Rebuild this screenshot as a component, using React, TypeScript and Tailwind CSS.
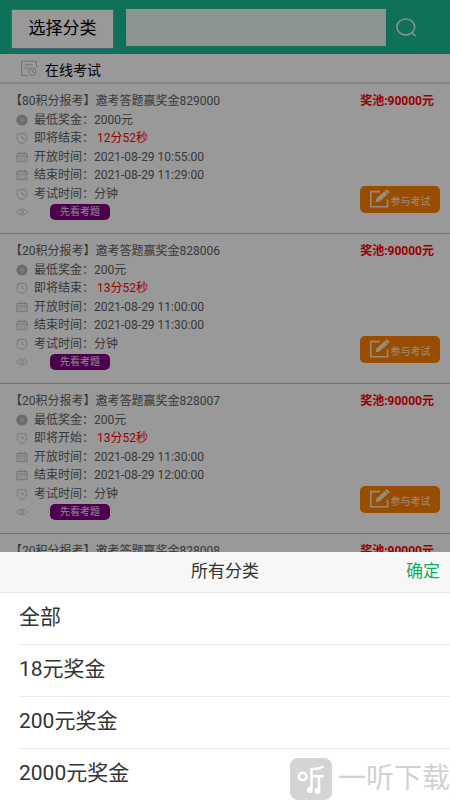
import { useState } from 'react'
import type { ReactNode } from 'react'

interface Exam {
  id: string
  points: number
  prize: string
  timerLabel: string
  timer: string
  opensAt: string
  endsAt: string
}

const EXAMS: Exam[] = [
  { id: '829000', points: 80, prize: '2000元', timerLabel: '即将结束', timer: '12分52秒', opensAt: '2021-08-29 10:55:00', endsAt: '2021-08-29 11:29:00' },
  { id: '828006', points: 20, prize: '200元', timerLabel: '即将结束', timer: '13分52秒', opensAt: '2021-08-29 11:00:00', endsAt: '2021-08-29 11:30:00' },
  { id: '828007', points: 20, prize: '200元', timerLabel: '即将开始', timer: '13分52秒', opensAt: '2021-08-29 11:30:00', endsAt: '2021-08-29 12:00:00' },
  { id: '828008', points: 20, prize: '200元', timerLabel: '即将开始', timer: '43分52秒', opensAt: '2021-08-29 12:00:00', endsAt: '2021-08-29 12:30:00' },
]

const CATEGORIES = ['全部', '18元奖金', '200元奖金', '2000元奖金']

function SearchIcon() {
  return (
    <svg viewBox="0 0 20 20" className="size-5" fill="none" stroke="#e4f5f0" strokeWidth="1.5" strokeLinecap="round">
      <ellipse cx="9.8" cy="9" rx="8.9" ry="8" />
      <path d="M16 14.6l3.2 3.2" />
    </svg>
  )
}

function PaperIcon() {
  return (
    <svg viewBox="0 0 18 17" className="h-[17px] w-[18px]" fill="none" stroke="#bdbdbd" strokeWidth="1">
      <path d="M7.5 15.5H1.6V1.2h14.8v6.6M5 4.8h7.5M4 8h5" />
      <circle cx="12.4" cy="11.8" r="3.6" />
      <path d="M12.2 9.8v2.4h2" />
    </svg>
  )
}

function CoinIcon() {
  return (
    <svg viewBox="0 0 12 12" className="size-3">
      <circle cx="6" cy="6" r="5.6" fill="#b4b4b4" />
      <path d="M4 3.8l2 2.4 2-2.4M6 6v2.8M4.3 6.6h3.4" fill="none" stroke="#dedede" strokeWidth="0.9" />
    </svg>
  )
}

function ClockIcon() {
  return (
    <svg viewBox="0 0 12 12" className="size-3" fill="none" stroke="#c8c8c8" strokeWidth="1">
      <circle cx="6" cy="6.3" r="4.9" />
      <path d="M6 3.6v3h2.6M.7 2.8L2.8.8M11.3 2.8L9.2.8" />
    </svg>
  )
}

function CalendarIcon() {
  return (
    <svg viewBox="0 0 12 12" className="size-3" fill="none" stroke="#bdbdbd" strokeWidth="0.9">
      <path d="M.9 2.5h10.2v8.2H.9zM.9 5h10.2M3.2.8v2.8M6 .8v2.8M8.8.8v2.8" />
      <path d="M2.6 7h1.4M5.3 7h1.4M8 7h1.4M2.6 9h1.4M5.3 9h1.4M8 9h1.4" />
    </svg>
  )
}

function EyeIcon() {
  return (
    <svg viewBox="0 0 12 12" className="size-3" fill="none" stroke="#cacaca" strokeWidth="0.9">
      <path d="M.5 6C2 3.9 4 3 6 3s4 .9 5.5 3C10 8.1 8 9 6 9S2 8.1.5 6z" />
      <circle cx="6" cy="6" r="1.7" />
    </svg>
  )
}

function EditIcon() {
  return (
    <svg viewBox="0 0 20 20" className="size-5" fill="none" stroke="#ffead2" strokeWidth="1.6">
      <path d="M10 2.6H.8v15.2h16.8v-7" />
      <path d="M5.4 13.4l1.4-4.2L16.6.2l3.2 2.8-9.8 9z" fill="#ffead2" stroke="none" />
      <path d="M14.2 1.6l3.6 3.2" stroke="#ff8000" strokeWidth="0.8" />
    </svg>
  )
}

function Row({ icon, label, children }: { icon: ReactNode; label: string; children: ReactNode }) {
  return (
    <div className="flex h-[18px] items-center gap-1.5">
      {icon}
      <p>
        {label}：{children}
      </p>
    </div>
  )
}

function ExamCard({ exam }: { exam: Exam }) {
  return (
    <li className="flex h-[150px] items-start justify-between border-b border-[#bdbdbd] pt-2 pr-2.5 pb-3 text-xs leading-[18px] text-[#5e5e5e]">
      <div className="flex h-full flex-col justify-between pl-4">
        <h2 className="-ml-1.5">
          【{exam.points}积分报考】邀考答题赢奖金{exam.id}
        </h2>
        <Row icon={<CoinIcon />} label="最低奖金">{exam.prize}</Row>
        <Row icon={<ClockIcon />} label={exam.timerLabel}>
          <span className="ml-[3px] text-[#ff0000]">{exam.timer}</span>
        </Row>
        <Row icon={<CalendarIcon />} label="开放时间">{exam.opensAt}</Row>
        <Row icon={<CalendarIcon />} label="结束时间">{exam.endsAt}</Row>
        <Row icon={<ClockIcon />} label="考试时间">分钟</Row>
        <div className="flex h-[18px] items-center gap-[22px]">
          <EyeIcon />
          <button type="button" className="h-4 w-[60px] rounded-[5px] bg-[#800080] text-[10px] leading-4 text-[#f0e0f0]">
            先看考题
          </button>
        </div>
      </div>
      <div className="flex h-full flex-col items-end justify-between pb-2">
        <p className="pr-1.5 font-bold text-[#ff0000]">奖池:90000元</p>
        <button type="button" className="flex h-[27px] w-20 items-center justify-center gap-px rounded-[5px] bg-[#ff8000] pb-0.5 text-[10px] text-[#ffead2]">
          <EditIcon />
          <span className="pt-1.5">参与考试</span>
        </button>
      </div>
    </li>
  )
}

function Watermark() {
  return (
    <div className="pointer-events-none absolute right-0 bottom-0 flex items-center gap-1.5 text-[28px] leading-[42px] text-[#d2d2d2]">
      <svg viewBox="0 0 42 42" className="size-[42px]" fill="none" stroke="#fff" strokeWidth="2.5" strokeLinecap="round" strokeLinejoin="round">
        <rect width="42" height="42" rx="8" fill="#d4d4d4" stroke="none" />
        <circle cx="12.7" cy="18.5" r="3.8" />
        <path d="M32.5 8.7c-3 2-7 2.3-11 2.3v19.5M21.5 18.2h11.2M29 18.2v14.5" />
        <circle cx="19.8" cy="32" r="1.7" fill="#fff" />
        <circle cx="27.5" cy="33" r="1.7" fill="#fff" />
      </svg>
      <span>一听下载</span>
    </div>
  )
}

export default function App() {
  const [category, setCategory] = useState(CATEGORIES[0])
  const [open, setOpen] = useState(true)

  return (
    <div className="flex h-screen flex-col overflow-hidden bg-white font-[Roboto,'Noto_Sans_CJK_SC',sans-serif]">
      <div className="relative min-h-0 flex-1 overflow-hidden">
        <header className="flex h-[54px] items-start bg-[#1bbc96] px-[11px] pt-[9px]">
          <button
            type="button"
            onClick={() => setOpen(true)}
            className="h-10 w-[103px] shrink-0 border border-[#6f9fe0] bg-white text-[17px] text-black"
          >
            选择分类
          </button>
          <input type="search" aria-label="搜索" className="ml-3 h-[37px] min-w-0 flex-1 bg-[#e8f7f0] px-2 text-sm outline-none" />
          <button type="button" aria-label="搜索" className="mr-[23px] ml-2.5 flex h-[37px] items-center">
            <SearchIcon />
          </button>
        </header>

        <main>
          <div className="flex h-[30px] items-center gap-[7px] border-b-2 border-[#dcdcdc] pl-5">
            <PaperIcon />
            <h1 className="pt-1 text-sm text-black">在线考试</h1>
          </div>
          <ul>
            {EXAMS.map((exam) => (
              <ExamCard key={exam.id} exam={exam} />
            ))}
          </ul>
        </main>

        {open && <div className="absolute inset-0 bg-black/40" onClick={() => setOpen(false)} />}
      </div>

      {open && (
        <section className="relative shrink-0 bg-white text-[#333]">
          <div className="grid h-[41px] grid-cols-3 items-center border-b border-[#e6e6e6] bg-[#f7f7f7] px-2.5 pb-px text-[17px]">
            <h2 className="col-start-2 text-center">所有分类</h2>
            <button type="button" onClick={() => setOpen(false)} className="justify-self-end text-[#09b062]">
              确定
            </button>
          </div>
          <ul className="divide-y divide-[#ebebeb] pl-[19px]">
            {CATEGORIES.map((c) => (
              <li key={c}>
                <button
                  type="button"
                  aria-pressed={c === category}
                  onClick={() => setCategory(c)}
                  className="block h-[51px] w-full pb-px text-left text-[21px]"
                >
                  {c}
                </button>
              </li>
            ))}
          </ul>
          <Watermark />
        </section>
      )}
    </div>
  )
}
